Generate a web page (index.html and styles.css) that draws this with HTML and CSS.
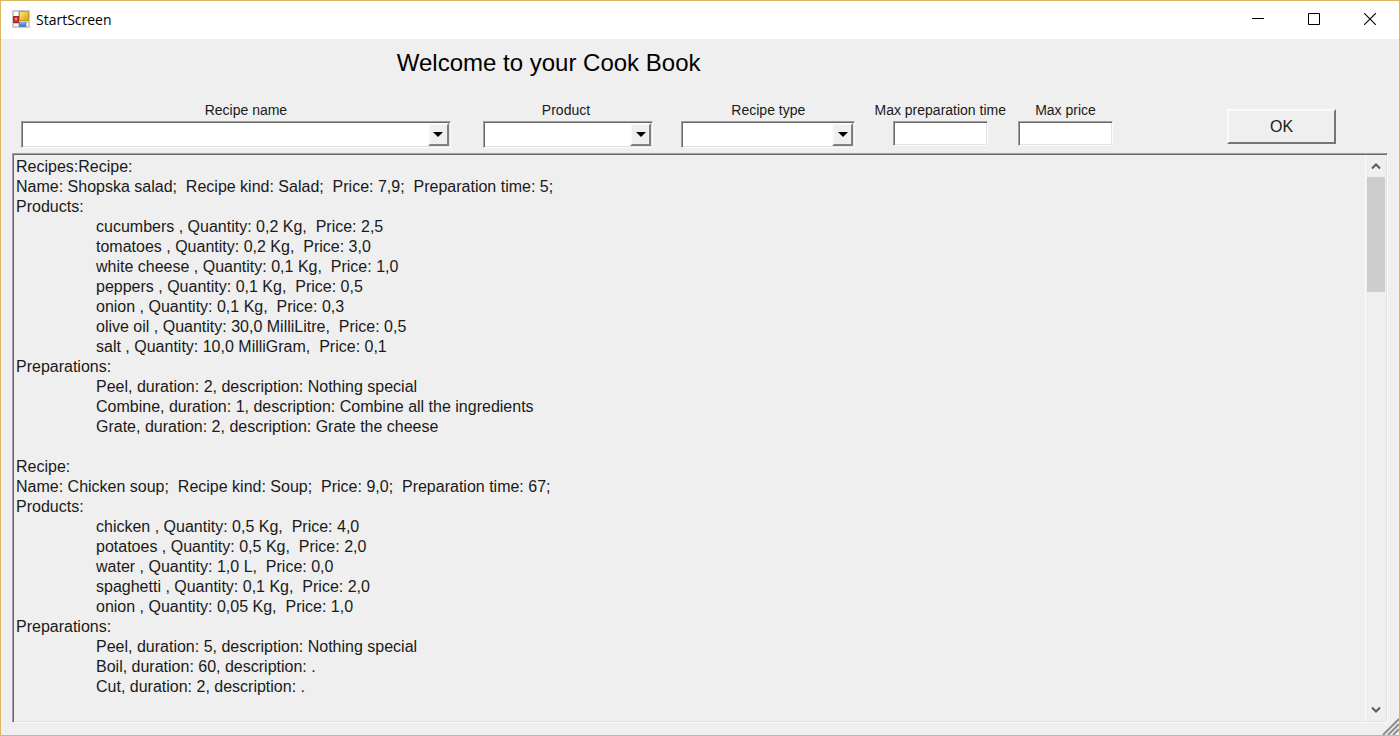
FILE: index.html
```
<!DOCTYPE html>
<html lang="en">
<head>
<meta charset="utf-8">
<title>StartScreen</title>
<link rel="stylesheet" href="styles.css">
</head>
<body>
<div class="window">
  <header class="titlebar">
    <svg class="app-icon" width="18" height="18" viewBox="0 0 18 18" aria-hidden="true">
      <defs>
        <linearGradient id="gold" x1="0" y1="0" x2="1" y2="1"><stop offset="0" stop-color="#ffe680"/><stop offset="1" stop-color="#dda00c"/></linearGradient>
        <linearGradient id="blue" x1="0" y1="0" x2="0" y2="1"><stop offset="0" stop-color="#8fbcf5"/><stop offset="1" stop-color="#3b76d0"/></linearGradient>
      </defs>
      <rect width="18" height="18" rx="1" fill="#cbcbcb"/>
      <path d="M2 2h4v4H2zM2 14h4v2H2zM15 13h1v3h-1z" fill="#fff"/>
      <rect x="1" y="6" width="6" height="7" fill="#a82424"/>
      <rect x="2" y="7" width="4" height="5" fill="#c93c36"/>
      <rect x="3" y="8" width="2" height="2" fill="#e39087"/>
      <rect x="7" y="1" width="10" height="10" fill="#cf9a18"/>
      <rect x="8" y="2" width="8" height="8" fill="url(#gold)"/>
      <rect x="7" y="12" width="7" height="5" fill="#4a80d0"/>
      <rect x="8" y="12" width="5" height="4" fill="url(#blue)"/>
    </svg>
    <span class="window-title">StartScreen</span>
    <div class="window-buttons">
      <button type="button" class="caption-button" aria-label="Minimize"><svg width="12" height="12" viewBox="0 0 12 12"><path d="M0 5.5h12" stroke="#000"/></svg></button>
      <button type="button" class="caption-button" aria-label="Maximize"><svg width="12" height="12" viewBox="0 0 12 12"><path d="M.5.5h11v11H.5z" fill="none" stroke="#000"/></svg></button>
      <button type="button" class="caption-button" aria-label="Close"><svg width="12" height="12" viewBox="0 0 12 12"><path d="M0 0l12 12M12 0L0 12" stroke="#000" stroke-width="1.1"/></svg></button>
    </div>
  </header>
  <main class="content">
    <h1 class="heading">Welcome to your Cook Book</h1>
    <form class="filters">
      <div class="field field-name">
        <label for="recipe-name">Recipe name</label>
        <div class="combo"><select id="recipe-name"><option></option></select><span class="combo-arrow"></span></div>
      </div>
      <div class="field field-product">
        <label for="product">Product</label>
        <div class="combo"><select id="product"><option></option></select><span class="combo-arrow"></span></div>
      </div>
      <div class="field field-type">
        <label for="recipe-type">Recipe type</label>
        <div class="combo"><select id="recipe-type"><option></option></select><span class="combo-arrow"></span></div>
      </div>
      <div class="field field-time">
        <label for="max-time">Max preparation time</label>
        <input class="textbox" id="max-time" type="text">
      </div>
      <div class="field field-price">
        <label for="max-price">Max price</label>
        <input class="textbox" id="max-price" type="text">
      </div>
      <button type="button" class="ok-button">OK</button>
    </form>
    <section class="results">
      <textarea class="results-text" aria-label="Recipes" readonly>Recipes:Recipe:
Name: Shopska salad;  Recipe kind: Salad;  Price: 7,9;  Preparation time: 5;
Products:
	cucumbers , Quantity: 0,2 Kg,  Price: 2,5
	tomatoes , Quantity: 0,2 Kg,  Price: 3,0
	white cheese , Quantity: 0,1 Kg,  Price: 1,0
	peppers , Quantity: 0,1 Kg,  Price: 0,5
	onion , Quantity: 0,1 Kg,  Price: 0,3
	olive oil , Quantity: 30,0 MilliLitre,  Price: 0,5
	salt , Quantity: 10,0 MilliGram,  Price: 0,1
Preparations:
	Peel, duration: 2, description: Nothing special
	Combine, duration: 1, description: Combine all the ingredients
	Grate, duration: 2, description: Grate the cheese

Recipe:
Name: Chicken soup;  Recipe kind: Soup;  Price: 9,0;  Preparation time: 67;
Products:
	chicken , Quantity: 0,5 Kg,  Price: 4,0
	potatoes , Quantity: 0,5 Kg,  Price: 2,0
	water , Quantity: 1,0 L,  Price: 0,0
	spaghetti , Quantity: 0,1 Kg,  Price: 2,0
	onion , Quantity: 0,05 Kg,  Price: 1,0
Preparations:
	Peel, duration: 5, description: Nothing special
	Boil, duration: 60, description: .
	Cut, duration: 2, description: .</textarea>
      <div class="scrollbar">
        <button type="button" class="scroll-button" aria-label="Scroll up"><svg width="10" height="8" viewBox="0 0 10 8"><path d="M1 6.5L5 2.5l4 4" fill="none" stroke="#5c5c5c" stroke-width="2"/></svg></button>
        <div class="scroll-track"><div class="scroll-thumb"></div></div>
        <button type="button" class="scroll-button" aria-label="Scroll down"><svg width="10" height="8" viewBox="0 0 10 8"><path d="M1 1.5l4 4 4-4" fill="none" stroke="#5c5c5c" stroke-width="2"/></svg></button>
      </div>
    </section>
  </main>
  <svg class="resize-grip" width="17" height="17" viewBox="0 0 17 17" aria-hidden="true"><path d="M1 17L17 1M6 17L17 6M11 17l6-6" stroke="#8c8c8c" stroke-width="2"/></svg>
</div>
</body>
</html>
```
FILE: styles.css
```
* { box-sizing: border-box; }

body {
  margin: 0;
  font-family: "Liberation Sans", Arial, sans-serif;
  color: #1a1a1a;
}

.window {
  position: relative;
  display: flex;
  flex-direction: column;
  min-height: 100vh;
  border: 1px solid #dcb762;
  background: #efefef;
}

.titlebar {
  display: flex;
  align-items: center;
  height: 38px;
  padding: 0 1px 2px 11px;
  background: #fff;
}

.window-title {
  margin-left: 6px;
  font-family: "Open Sans", "Noto Sans", sans-serif;
  font-size: 14px;
  color: #000;
}

.window-buttons {
  display: flex;
  align-self: stretch;
  margin-left: auto;
}

.caption-button {
  display: flex;
  align-items: center;
  justify-content: center;
  width: 56px;
  padding: 0;
  border: 0;
  background: none;
}

.content {
  display: flex;
  flex: 1;
  flex-direction: column;
  padding: 8px 11px 12px;
}

.heading {
  margin: 0;
  padding-right: 22%;
  font-size: 24px;
  font-weight: 400;
  line-height: 32px;
  text-align: center;
  color: #000;
}

.filters {
  display: flex;
  align-items: flex-end;
  margin-top: 22px;
  padding: 0 52px 5px 9px;
}

.field {
  display: flex;
  flex-direction: column;
  align-items: center;
  min-width: 0;
}

.field label {
  font-size: 14px;
  line-height: 18px;
  margin-bottom: 2px;
  white-space: nowrap;
}

.field-name { flex: 429; }
.field-name label { padding-left: 20px; }
.field-product { flex: 170; margin-left: 32px; }
.field-product label { padding-right: 4px; }
.field-type { flex: 174; margin-left: 28px; }
.field-time { margin-left: 19px; }
.field-price { margin-left: 12px; }

.combo {
  position: relative;
  width: 100%;
}

.combo select,
.textbox {
  display: block;
  border: 1px solid;
  border-color: #a0a0a0 #fafafa #fafafa #a0a0a0;
  border-radius: 0;
  background: #fff;
  box-shadow: inset 1px 1px #696969, inset -1px -1px #e3e3e3;
  outline: 0;
}

.combo select {
  width: 100%;
  height: 27px;
  appearance: none;
}

.combo-arrow {
  position: absolute;
  top: 2px;
  right: 2px;
  bottom: 2px;
  display: flex;
  align-items: center;
  justify-content: center;
  width: 21px;
  border: 2px solid;
  border-color: #fafafa #808080 #808080 #fafafa;
  background: #efefef;
  pointer-events: none;
}

.combo-arrow::before {
  content: "";
  border: 5px solid transparent;
  border-top-color: #000;
  border-bottom: 0;
}

.textbox {
  width: 95px;
  height: 25px;
  margin-bottom: 2px;
}

.ok-button {
  width: 109px;
  height: 35px;
  margin: 0 0 4px 114px;
  border: 2px solid;
  border-color: #fafafa #767676 #767676 #fafafa;
  background: #efefef;
  font: 16px "Liberation Sans", Arial, sans-serif;
  color: #1a1a1a;
}

.results {
  display: flex;
  flex: 1;
  padding: 1px;
  border: 1px solid;
  border-color: #a0a0a0 #fafafa #fafafa #a0a0a0;
  box-shadow: inset 1px 1px #696969, inset -1px -1px #e3e3e3;
}

.results-text {
  flex: 1;
  min-height: 560px;
  padding: 2px;
  border: 0;
  outline: 0;
  resize: none;
  overflow: hidden;
  background: transparent;
  font: 16px/20px "Liberation Sans", Arial, sans-serif;
  color: #1a1a1a;
  tab-size: 80px;
}

.scrollbar {
  display: flex;
  flex-direction: column;
  width: 21px;
  border-left: 1px solid #fafafa;
}

.scroll-button {
  display: flex;
  align-items: center;
  justify-content: center;
  height: 22px;
  padding: 0;
  border: 0;
  background: none;
}

.scroll-track {
  flex: 1;
}

.scroll-thumb {
  width: 18px;
  height: 22%;
  margin-left: 1px;
  background: #cdcdcd;
}

.resize-grip {
  position: absolute;
  right: 0;
  bottom: 0;
}
```
